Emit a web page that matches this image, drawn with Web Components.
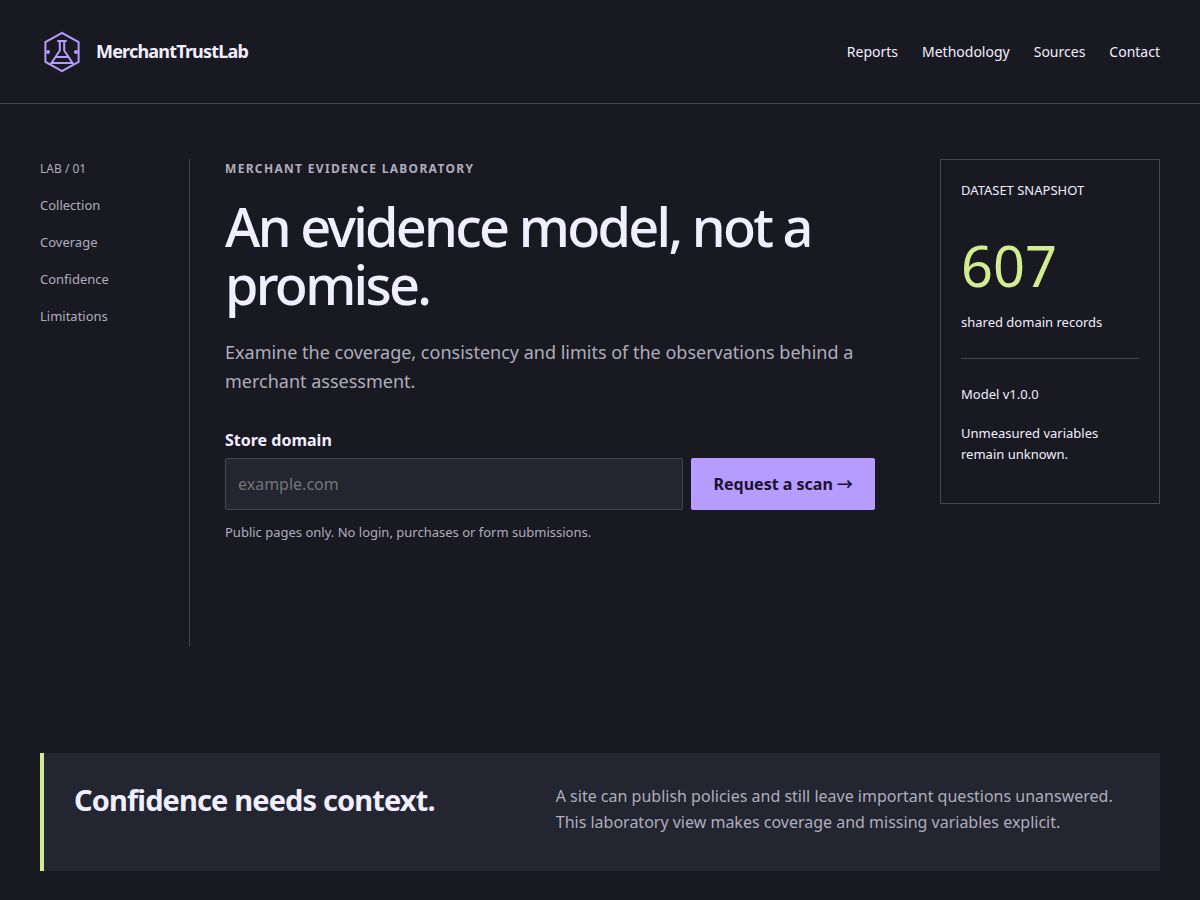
<!DOCTYPE html>
<html lang="en">
<head>
<meta charset="utf-8">
<meta name="viewport" content="width=device-width, initial-scale=1">
<title>MerchantTrustLab</title>
<style>
:root {
  --bg: #191922; --surface: #232530; --line: #46464f; --text: #f1eeff;
  --muted: #afadbd; --accent: #b69cff; --ink: #1b1230; --lime: #d2ed91;
}
body { margin: 0; background: var(--bg); color: var(--text); font: 16px/26px "Noto Sans", "Noto Sans CJK JP", sans-serif; }
</style>
</head>
<body>
<lab-page></lab-page>
<script>
function define(name, html) {
  const template = document.createElement('template');
  template.innerHTML = '<style>*{box-sizing:border-box}:host{display:block}</style>' + html;
  customElements.define(name, class extends HTMLElement {
    constructor() {
      super();
      this.attachShadow({ mode: 'open' }).append(template.content.cloneNode(true));
    }
  });
}

define('lab-logo', `
<style>
a { display: flex; align-items: center; gap: 12px; color: var(--text); text-decoration: none; font-size: 18px; line-height: 26px; font-weight: 700; letter-spacing: -0.045em; }
svg { display: block; width: 44px; height: 44px; }
span { padding-bottom: 2px; }
</style>
<a href="#"><svg viewBox="0 0 44 44" fill="none" stroke="var(--accent)" stroke-width="2" aria-hidden="true">
<path d="M22 2.800 38.600 12.200V31.800L22 41.200 5.400 31.800V12.200Z"/>
<path d="M17.300 11H26.700M19.800 11V20.500L11.500 33H32.500L24.200 20.500V11M15.800 27H28.200"/>
<circle cx="8" cy="22" r="2" fill="var(--accent)" stroke="none"/><circle cx="36" cy="22" r="2" fill="var(--accent)" stroke="none"/>
</svg><span>MerchantTrustLab</span></a>`);

define('lab-header', `
<style>
:host { border-bottom: 1px solid var(--line); }
header { display: flex; justify-content: space-between; align-items: center; flex-wrap: wrap; gap: 20px; padding: 30px 40px 29px; }
nav { display: flex; gap: 24px; }
::slotted(a) { color: var(--text); text-decoration: none; font-size: 14px; }
</style>
<header><lab-logo></lab-logo><nav aria-label="Main"><slot></slot></nav></header>`);

define('lab-rail', `
<style>
:host { border-right: 1px solid var(--line); color: var(--muted); font-size: 13px; line-height: 21px; }
nav { display: flex; flex-direction: column; align-items: flex-start; gap: 16px; }
span { font-size: 12px; line-height: 20px; }
::slotted(a) { color: inherit; text-decoration: none; }
</style>
<nav aria-label="Sections"><span>LAB / 01</span><slot></slot></nav>`);

define('scan-form', `
<style>
label { display: block; font-weight: 700; margin-bottom: 5px; }
.row { display: flex; gap: 8px; }
input, button { font: inherit; height: 52px; border-radius: 2px; }
input { flex: 1; min-width: 0; padding: 0 12px; border: 1px solid var(--line); background: var(--surface); color: var(--text); }
input::placeholder { color: #757575; }
button { padding: 0 22px 0 23px; border: 0; background: var(--accent); color: var(--ink); font-weight: 700; }
p { margin: 12px 0 0; color: var(--muted); font-size: 13px; line-height: 21px; }
</style>
<form><label for="domain">Store domain</label>
<div class="row"><input id="domain" type="text" placeholder="example.com"><button type="button">Request a scan →</button></div>
<p>Public pages only. No login, purchases or form submissions.</p></form>`);

define('lab-intro', `
<style>
:host { max-width: 650px; }
.eyebrow { margin: 0; color: var(--muted); font-size: 12px; line-height: 20px; font-weight: 700; letter-spacing: 0.11em; text-transform: uppercase; }
h1 { margin: 18px 0 25px; font-size: 54px; line-height: 58px; font-weight: 500; letter-spacing: -0.05em; }
.lead { margin: 0 0 31px; color: var(--muted); font-size: 18px; line-height: 29px; }
</style>
<p class="eyebrow">Merchant evidence laboratory</p>
<h1>An evidence model, not a promise.</h1>
<p class="lead">Examine the coverage, consistency and limits of the observations behind a merchant assessment.</p>
<scan-form></scan-form>`);

define('lab-snapshot', `
<style>
:host { border: 1px solid var(--line); padding: 20px; font-size: 13px; line-height: 21px; }
p { margin: 0; }
strong { display: block; margin: 36px 0 19px; color: var(--lime); font-size: 56px; line-height: 56px; font-weight: 400; }
hr { margin: 25px 0; border: 0; border-top: 1px solid var(--line); }
.note { margin: 18px 0; }
</style>
<p>DATASET SNAPSHOT</p><strong>607</strong><p>shared domain records</p><hr><p>Model v1.0.0</p>
<p class="note">Unmeasured variables remain unknown.</p>`);

define('lab-context', `
<style>
:host { display: grid; grid-template-columns: minmax(0, 10fr) minmax(0, 13fr); gap: 40px; margin: 0 40px; padding: 30px; border-left: 4px solid var(--lime); background: var(--surface); }
h2 { margin: 0; font-size: 29px; line-height: 33px; font-weight: 700; letter-spacing: -0.03em; }
p { margin: 0 0 6px; color: var(--muted); }
</style>
<h2>Confidence needs context.</h2>
<p>A site can publish policies and still leave important questions unanswered. This laboratory view makes coverage and missing variables explicit.</p>`);

define('lab-page', `
<style>
main { padding-bottom: 29px; }
.hero { display: grid; grid-template-columns: 150px minmax(0, 1fr) 220px; gap: 35px; padding: 55px 40px 107px; }
lab-rail { min-height: 487px; }
lab-snapshot { align-self: start; }
</style>
<lab-header><a href="#reports">Reports</a><a href="#methodology">Methodology</a><a href="#sources">Sources</a><a href="#contact">Contact</a></lab-header>
<main><section class="hero">
<lab-rail><a href="#collection">Collection</a><a href="#coverage">Coverage</a><a href="#confidence">Confidence</a><a href="#limitations">Limitations</a></lab-rail>
<lab-intro></lab-intro><lab-snapshot></lab-snapshot></section>
<lab-context></lab-context></main>`);
</script>
</body>
</html>
